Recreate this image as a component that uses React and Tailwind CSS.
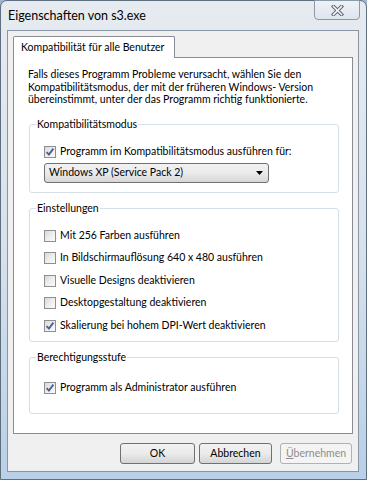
import React from "react";

const Box = ({ checked }) => (
  <span className="flex h-[12px] w-[12px] shrink-0 items-center justify-center border border-[#8e8f8f] bg-white">
    <span className="flex h-[10px] w-[10px] items-center justify-center bg-gradient-to-br from-[#d9d9d9] via-[#ededed] to-[#fbfbfb]">
      {checked && (
        <svg width="10" height="10" viewBox="0 0 10 10">
          <path d="M1.6 5.2 L3.9 7.6 L8.4 1.6" fill="none" stroke="#4a5f9e" strokeWidth="1.9" />
        </svg>
      )}
    </span>
  </span>
);

const Check = ({ checked, children, h = "h-[22px]" }) => (
  <div className={`flex items-center gap-[4px] ${h}`}>
    <Box checked={checked} />
    <span className="whitespace-nowrap">{children}</span>
  </div>
);

const Group = ({ title, className, children }) => (
  <fieldset className={`ml-[15px] w-[310px] rounded-[3px] border border-[#d5dfe5] px-[6px] ${className}`}>
    <legend className="px-[1px] leading-[15px]">{title}</legend>
    <div className="pl-[8px]">{children}</div>
  </fieldset>
);

const Button = ({ children, disabled, w }) => (
  <div
    className={`flex h-[21px] items-center justify-center rounded-[3px] border ${w} ${
      disabled
        ? "border-[#adb2b5] bg-[#f4f4f4] text-[#8d8d8d]"
        : "border-[#707070] bg-gradient-to-b from-[#f2f2f2] via-[#ebebeb] to-[#d4d4d4]"
    }`}
  >
    {children}
  </div>
);

export default function App() {
  return (
    <div className="h-[480px] w-[367px] overflow-hidden bg-[#9fb5cc] font-['Lato',sans-serif] text-[10.5px] text-black">
      <div className="flex h-[480px] w-[367px] flex-col rounded-t-[7px] border border-[#5f6f80] bg-gradient-to-b from-[#e6ebf0] via-[#d8e2eb] to-[#b9d0e8]">
        {/* title bar */}
        <div className="flex h-[29px] items-start justify-between">
          <span className="pl-[7px] pt-[6px] text-[12.5px] leading-[18px]">Eigenschaften von s3.exe</span>
          <div className="-mt-px mr-[6px] flex h-[20px] w-[46px] items-center justify-center rounded-b-[4px] border border-[#8c99a7] bg-gradient-to-b from-[#eef2f6] to-[#dde5ed]">
            <svg width="13" height="11" viewBox="0 0 13 11">
              <path d="M2.5 1.5 L10.5 9.5 M10.5 1.5 L2.5 9.5" stroke="#5d6570" strokeWidth="3.6" strokeLinecap="square" />
              <path d="M2.5 1.5 L10.5 9.5 M10.5 1.5 L2.5 9.5" stroke="#f4f6f8" strokeWidth="1.6" strokeLinecap="square" />
            </svg>
          </div>
        </div>

        {/* client area */}
        <div className="ml-[6px] flex h-[442px] w-[352px] flex-col border border-[#8795a4] bg-[#f0f0f0] pl-[5px] pt-[5px]">
          <div className="relative z-10 -mb-px flex h-[22px] w-[162px] items-center whitespace-nowrap rounded-t-[2px] border border-b-0 border-[#898c95] bg-white pl-[7px]">
            Kompatibilität für alle Benutzer
          </div>
          <div className="h-[377px] w-[340px] border border-[#898c95] bg-white pt-[10px]">
            <p className="whitespace-nowrap pl-[14px] leading-[12.5px]">
              Falls dieses Programm Probleme verursacht, wählen Sie den
              <br />
              Kompatibilitätsmodus, der mit der früheren Windows- Version
              <br />
              übereinstimmt, unter der das Programm richtig funktionierte.
            </p>

            <Group title="Kompatibilitätsmodus" className="mt-[11px] pb-[9px]">
              <div className="pt-[9px]">
                <Check checked>Programm im Kompatibilitätsmodus ausführen für:</Check>
                <div className="flex h-[20px] w-[225px] items-center justify-between rounded-[3px] border border-[#707070] bg-gradient-to-b from-[#f2f2f2] via-[#ebebeb] to-[#d6d6d6] pl-[4px] pr-[5px]">
                  <span>Windows XP (Service Pack 2)</span>
                  <svg width="7" height="4" viewBox="0 0 7 4">
                    <path d="M0 0 H7 L3.5 4 Z" fill="#000" />
                  </svg>
                </div>
              </div>
            </Group>

            <Group title="Einstellungen" className="mt-[8px] pb-[4px]">
              <div className="pt-[9px]">
                <Check h="h-[22.5px]">Mit 256 Farben ausführen</Check>
                <Check h="h-[22.5px]">In Bildschirmauflösung 640 x 480 ausführen</Check>
                <Check h="h-[22.5px]">Visuelle Designs deaktivieren</Check>
                <Check h="h-[22.5px]">Desktopgestaltung deaktivieren</Check>
                <Check h="h-[22.5px]" checked>Skalierung bei hohem DPI-Wert deaktivieren</Check>
              </div>
            </Group>

            <Group title="Berechtigungsstufe" className="mt-[8px] pb-[14px]">
              <div className="pt-[12px]">
                <Check checked>Programm als Administrator ausführen</Check>
              </div>
            </Group>
          </div>

          <div className="flex justify-end pr-[6px] pt-[9px]">
            <Button w="w-[75px] mr-[4px]">OK</Button>
            <Button w="w-[73px] mr-[8px]">Abbrechen</Button>
            <Button w="w-[72px]" disabled>
              <span>
                <span className="underline">Ü</span>bernehmen
              </span>
            </Button>
          </div>
        </div>
      </div>
    </div>
  );
}
